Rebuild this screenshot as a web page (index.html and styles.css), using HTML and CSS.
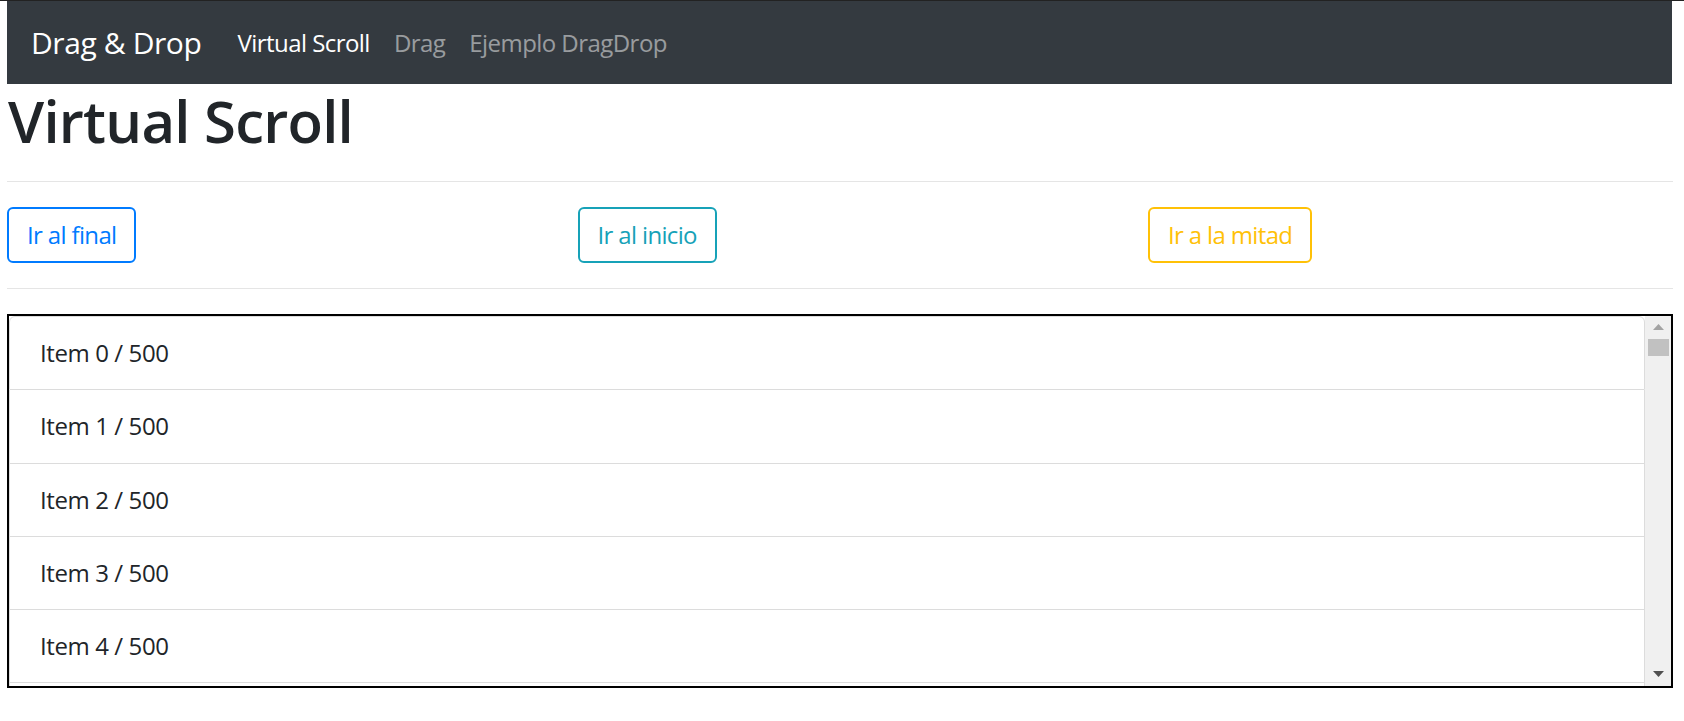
FILE: index.html
```html
<!DOCTYPE html>
<html lang="es">
<head>
<meta charset="utf-8">
<title>Drag &amp; Drop</title>
<link rel="stylesheet" href="styles.css">
</head>
<body>
<div class="page">
  <nav class="navbar">
    <a class="brand" href="#">Drag &amp; Drop</a>
    <ul class="nav">
      <li><a class="nav-link active" href="#">Virtual Scroll</a></li>
      <li><a class="nav-link" href="#">Drag</a></li>
      <li><a class="nav-link" href="#">Ejemplo DragDrop</a></li>
    </ul>
  </nav>

  <h1 class="title">Virtual Scroll</h1>
  <hr class="divider">

  <div class="actions">
    <div class="col"><button class="btn btn-primary">Ir al final</button></div>
    <div class="col"><button class="btn btn-info">Ir al inicio</button></div>
    <div class="col"><button class="btn btn-warning">Ir a la mitad</button></div>
  </div>

  <hr class="divider">

  <div class="viewport">
    <ul class="list">
      <li class="item">Item 0 / 500</li>
      <li class="item">Item 1 / 500</li>
      <li class="item">Item 2 / 500</li>
      <li class="item">Item 3 / 500</li>
      <li class="item">Item 4 / 500</li>
      <li class="item item-next" aria-hidden="true"></li>
    </ul>
    <div class="scrollbar">
      <div class="sb-btn sb-up">
        <svg width="11" height="6" viewBox="0 0 11 6"><polygon points="0,6 5.5,0 11,6" fill="#a3a3a3"/></svg>
      </div>
      <div class="sb-thumb"></div>
      <div class="sb-fill"></div>
      <div class="sb-btn sb-down">
        <svg width="11" height="6" viewBox="0 0 11 6"><polygon points="0,0 11,0 5.5,6" fill="#505050"/></svg>
      </div>
    </div>
  </div>
</div>
</body>
</html>
```

FILE: styles.css
```css
* { box-sizing: border-box; }

html, body {
  margin: 0;
  padding: 0;
  background: #fff;
}

body {
  border-top: 1px solid #222;
  font-family: "Open Sans", "Noto Sans", sans-serif;
  color: #212529;
  overflow: hidden;
}

.page {
  padding: 0 11px 0 7px;
}

.navbar {
  height: 83px;
  margin-right: 1px;
  background: #343a40;
  display: flex;
  align-items: center;
  padding: 0 24px;
}

.brand {
  color: #fff;
  text-decoration: none;
  font-size: 30px;
  line-height: 45px;
  padding: 7px 0 8px;
  margin-right: 24px;
  letter-spacing: -0.4px;
}

.nav {
  list-style: none;
  margin: 0;
  padding: 0;
  display: flex;
}

.nav-link {
  display: block;
  padding: 12px 12px 12px;
  font-size: 24px;
  line-height: 36px;
  color: rgba(255, 255, 255, 0.5);
  text-decoration: none;
  letter-spacing: -0.55px;
}

.nav-link.active {
  color: #fff;
}

.title {
  margin: 0;
  height: 72px;
  padding: 2px 0 0 1px;
  font-size: 58px;
  line-height: 70px;
  font-weight: 600;
  letter-spacing: -0.75px;
}

.divider {
  margin: 25px 0;
  border: 0;
  border-top: 1px solid #e5e5e5;
  height: 0;
}

.actions {
  display: grid;
  grid-template-columns: 570.5px 570.5px 1fr;
}

.col {
  display: flex;
  align-items: flex-start;
}

.btn {
  font-family: inherit;
  font-size: 24px;
  line-height: 36px;
  padding: 8px 18px;
  background: transparent;
  border: 2px solid;
  border-radius: 6px;
  letter-spacing: -0.65px;
  cursor: pointer;
}

.btn-primary { color: #007bff; border-color: #007bff; }
.btn-info { color: #17a2b8; border-color: #17a2b8; }
.btn-warning { color: #ffc107; border-color: #ffc107; }

.viewport {
  height: 374px;
  border: 2px solid #000;
  display: flex;
  overflow: hidden;
}

.list {
  flex: 1;
  list-style: none;
  margin: 0;
  padding: 0;
  min-width: 0;
}

.item {
  padding: 18px 30px 18.25px;
  font-size: 24px;
  line-height: 36px;
  border: 1px solid #dcdcdc;
  border-top-width: 0;
  background: #fff;
  letter-spacing: -0.4px;
}

.item:first-child {
  border-top-width: 1px;
  border-top-left-radius: 6px;
  border-top-right-radius: 6px;
}

.item-next {
  height: 73px;
}

.scrollbar {
  width: 26px;
  flex: none;
  background: #f0f0f0;
  display: flex;
  flex-direction: column;
}

.sb-btn {
  height: 23px;
  flex: none;
  display: flex;
  justify-content: center;
  align-items: flex-start;
  padding-top: 8px;
}

.sb-up svg { margin-left: 1px; }
.sb-down svg { margin-left: 1px; }

.sb-thumb {
  height: 17px;
  margin: 0 2px 0 3px;
  background: #c1c1c1;
  flex: none;
}

.sb-fill { flex: 1; }
```
